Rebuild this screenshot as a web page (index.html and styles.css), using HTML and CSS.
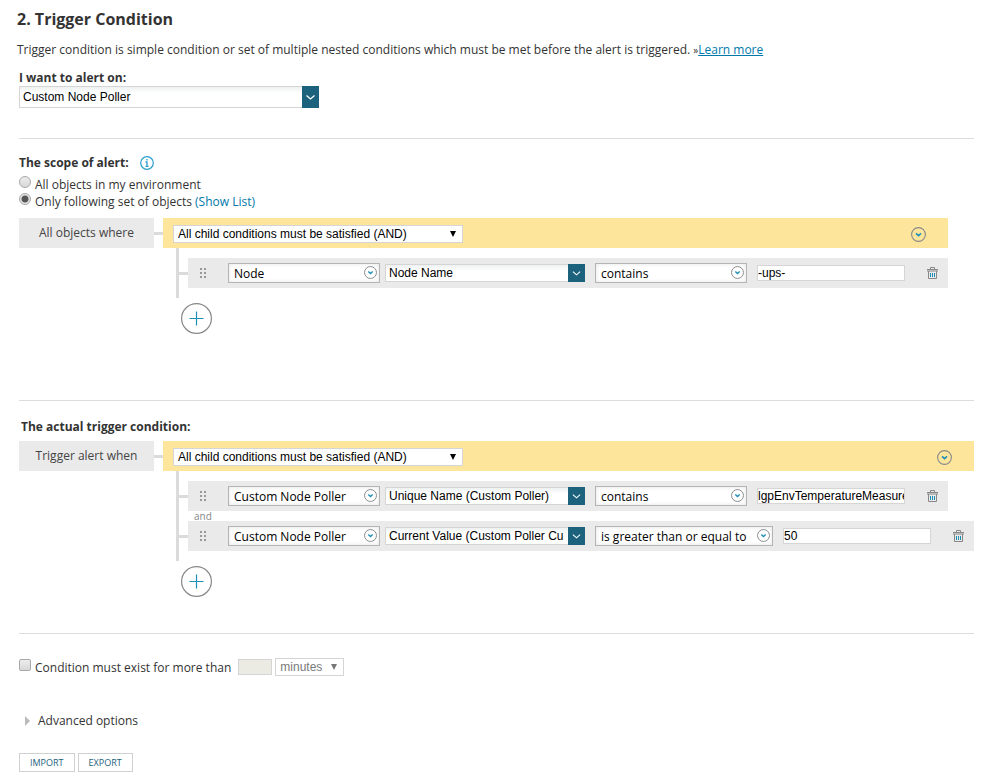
FILE: index.html
```
<!DOCTYPE html>
<html lang="en">
<head>
  <meta charset="utf-8">
  <title>Trigger Condition</title>
  <link rel="stylesheet" href="styles.css">
</head>
<body>

  <!-- shared icons -->
  <svg class="sprite" width="0" height="0">
    <symbol id="chevron" viewBox="0 0 17 20">
      <path d="M4.500 8.500L8.500 12L12.500 8.500" fill="none" stroke="#fff" stroke-width="1.200"/>
    </symbol>
    <symbol id="circle-chevron" viewBox="0 0 15 15">
      <circle cx="7.500" cy="7.500" r="6.900" fill="none" stroke="#888" stroke-width="1.100"/>
      <path d="M5 6.300L7.500 8.600L10 6.300" fill="none" stroke="#1d8fb5" stroke-width="1.600"/>
    </symbol>
    <symbol id="trash" viewBox="0 0 11 12">
      <path d="M3.500 2V.500H7.500V2M0 2.500H11M1.500 4V11.500H9.500V4M0 4H11" fill="none" stroke="#888"/>
      <path d="M3.500 6V10M5.500 6V10M7.500 6V10" stroke="#1d8fb5"/>
    </symbol>
    <symbol id="grip" viewBox="0 0 7 11">
      <path d="M0 0h2v2H0zM4 0h2v2H4zM0 4h2v2H0zM4 4h2v2H4zM0 8h2v2H0zM4 8h2v2H4z" fill="#999"/>
    </symbol>
    <symbol id="plus" viewBox="0 0 31 31">
      <circle cx="15.500" cy="15.500" r="14.900" fill="#fff" stroke="#888" stroke-width="1.200"/>
      <path d="M8.500 15.500H22.500M15.500 8.500V22.500" stroke="#1d8fb5" stroke-width="1.200"/>
    </symbol>
  </svg>

  <header class="intro">
    <h2>2. Trigger Condition</h2>
    <p>Trigger condition is simple condition or set of multiple nested conditions which must be met before the alert is triggered. <span class="raquo">»</span><a href="#">Learn more</a></p>
  </header>

  <section class="alert-on">
    <label class="title" for="alertOn">I want to alert on:</label>
    <div class="combo combo-large">
      <select id="alertOn"><option>Custom Node Poller</option></select>
      <svg><use href="#chevron"/></svg>
    </div>
  </section>

  <section class="scope">
    <div class="title">The scope of alert:
      <svg class="info" viewBox="0 0 14 14">
        <circle cx="7" cy="7" r="6.300" fill="none" stroke="#2a9fd0" stroke-width="1.200"/>
        <path d="M7 3V4.500M5.500 6H7V10M5.500 10.300H8.500" fill="none" stroke="#2a9fd0" stroke-width="1.300"/>
      </svg>
    </div>
    <div class="choice">
      <input type="radio" name="scope" id="scopeAll">
      <label for="scopeAll">All objects in my environment</label>
    </div>
    <div class="choice">
      <input type="radio" name="scope" id="scopeSet" checked>
      <label for="scopeSet">Only following set of objects</label> <a href="#">(Show List)</a>
    </div>

    <div class="query">
      <div class="query-label">All objects where</div>
      <div class="group">
        <div class="group-bar">
          <div class="plain">
            <select aria-label="Scope operator"><option>All child conditions must be satisfied (AND)</option></select>
          </div>
          <button class="icon-btn" aria-label="Group menu"><svg class="circle"><use href="#circle-chevron"/></svg></button>
        </div>
        <div class="children">
          <div class="rule">
            <svg class="grip"><use href="#grip"/></svg>
            <div class="round">
              <select aria-label="Object"><option>Node</option></select>
              <svg><use href="#circle-chevron"/></svg>
            </div>
            <div class="combo">
              <select aria-label="Field"><option>Node Name</option></select>
              <svg><use href="#chevron"/></svg>
            </div>
            <div class="round operator">
              <select aria-label="Comparison"><option>contains</option></select>
              <svg><use href="#circle-chevron"/></svg>
            </div>
            <input class="value" type="text" value="-ups-" aria-label="Value">
            <button class="icon-btn" aria-label="Delete"><svg class="trash"><use href="#trash"/></svg></button>
          </div>
        </div>
        <button class="add" aria-label="Add condition"><svg><use href="#plus"/></svg></button>
      </div>
    </div>
  </section>

  <section class="trigger">
    <div class="title indent">The actual trigger condition:</div>
    <div class="query">
      <div class="query-label">Trigger alert when</div>
      <div class="group">
        <div class="group-bar">
          <div class="plain">
            <select aria-label="Trigger operator"><option>All child conditions must be satisfied (AND)</option></select>
          </div>
          <button class="icon-btn" aria-label="Group menu"><svg class="circle"><use href="#circle-chevron"/></svg></button>
        </div>
        <div class="children">
          <div class="rule">
            <svg class="grip"><use href="#grip"/></svg>
            <div class="round">
              <select aria-label="Object"><option>Custom Node Poller</option></select>
              <svg><use href="#circle-chevron"/></svg>
            </div>
            <div class="combo">
              <select aria-label="Field"><option>Unique Name (Custom Poller)</option></select>
              <svg><use href="#chevron"/></svg>
            </div>
            <div class="round operator">
              <select aria-label="Comparison"><option>contains</option></select>
              <svg><use href="#circle-chevron"/></svg>
            </div>
            <input class="value" type="text" value="lgpEnvTemperatureMeasurement" aria-label="Value">
            <button class="icon-btn" aria-label="Delete"><svg class="trash"><use href="#trash"/></svg></button>
          </div>
          <div class="joiner">and</div>
          <div class="rule">
            <svg class="grip"><use href="#grip"/></svg>
            <div class="round">
              <select aria-label="Object"><option>Custom Node Poller</option></select>
              <svg><use href="#circle-chevron"/></svg>
            </div>
            <div class="combo">
              <select aria-label="Field"><option>Current Value (Custom Poller Current Value)</option></select>
              <svg><use href="#chevron"/></svg>
            </div>
            <div class="round operator wide">
              <select aria-label="Comparison"><option>is greater than or equal to</option></select>
              <svg><use href="#circle-chevron"/></svg>
            </div>
            <input class="value" type="text" value="50" aria-label="Value">
            <button class="icon-btn" aria-label="Delete"><svg class="trash"><use href="#trash"/></svg></button>
          </div>
        </div>
        <button class="add" aria-label="Add condition"><svg><use href="#plus"/></svg></button>
      </div>
    </div>
  </section>

  <section class="options">
    <div class="duration">
      <div class="choice">
        <input type="checkbox" id="mustExist">
        <label for="mustExist">Condition must exist for more than</label>
      </div>
      <input class="amount" type="text" aria-label="Duration" disabled>
      <div class="plain unit">
        <select aria-label="Unit" disabled><option>minutes</option></select>
      </div>
    </div>
    <button class="advanced">Advanced options</button>
    <div class="actions">
      <button>IMPORT</button>
      <button>EXPORT</button>
    </div>
  </section>

</body>
</html>
```
FILE: styles.css
```
* {
  box-sizing: border-box;
}

body {
  margin: 0;
  padding: 8px 15px 10px 19px;
  font-family: "Open Sans", sans-serif;
  font-size: 12px;
  line-height: 18px;
  color: #333;
  background: #fff;
}

a {
  color: #0079aa;
}

select, input, button {
  font-family: "Liberation Sans", Arial, sans-serif;
  font-size: 12px;
  color: #000;
  margin: 0;
}

button {
  background: none;
  border: 0;
  padding: 0;
  cursor: pointer;
}

svg {
  display: block;
}

.sprite {
  position: absolute;
}

.intro {
  margin-left: -2px;
}

h2 {
  margin: 0 0 11px;
  font-size: 16px;
  font-weight: 700;
  line-height: 22px;
}

p {
  margin: 0;
}

.raquo {
  font-size: 10px;
  line-height: 10px;
}

.title {
  display: flex;
  align-items: center;
  font-weight: 700;
}

.indent {
  margin-left: 2px;
}

.info {
  width: 14px;
  height: 14px;
  margin-left: 11px;
}

.alert-on {
  padding: 10px 0 30px;
}

.alert-on .title {
  line-height: 17px;
}

.scope {
  border-top: 1px solid #dcdcdc;
  padding: 15px 0 66px;
}

.trigger {
  border-top: 1px solid #dcdcdc;
  padding: 17px 0 36px;
}

.options {
  border-top: 1px solid #dcdcdc;
  padding-top: 24px;
}

/* radios and tick boxes */
.choice {
  display: flex;
  align-items: flex-start;
  line-height: 17px;
}

.scope .title {
  margin-bottom: 4px;
}

.choice input {
  appearance: none;
  width: 12px;
  height: 12px;
  margin-right: 4px;
  border: 1px solid #a8a8a8;
  border-radius: 50%;
  background: linear-gradient(#ececec, #d8d8d8);
}

.choice input[type="radio"]:checked {
  background: radial-gradient(circle, #555 0, #555 3px, #e4e4e4 4px);
}

.choice input[type="checkbox"] {
  border-radius: 2px;
}

.choice a {
  margin-left: 3px;
  text-decoration: none;
}

/* drop-downs */
select {
  appearance: none;
  display: block;
  width: 100%;
  height: 18px;
  padding: 0 20px 0 3px;
  border: 1px solid #d5d5d5;
  border-radius: 0;
  background: #fff;
}

.combo, .round, .plain {
  position: relative;
}

.combo {
  width: 200px;
}

.combo select {
  background: linear-gradient(#eef1f2, #fff 6px);
}

.combo svg {
  position: absolute;
  top: 0;
  right: 0;
  width: 17px;
  height: 100%;
  background: #1c627d;
  pointer-events: none;
}

.combo-large {
  width: 300px;
}

.combo-large select {
  height: 22px;
}

.round {
  width: 152px;
}

.round.wide {
  width: 178px;
}

.round select {
  height: 20px;
  padding-left: 5px;
  font-family: "Open Sans", sans-serif;
  border-color: #b4b4b4;
  box-shadow: inset 0 0 4px #e4e4e4;
}

.round svg {
  position: absolute;
  top: 3px;
  right: 3px;
  width: 13px;
  height: 13px;
  pointer-events: none;
}

.plain {
  width: 290px;
}

.plain select {
  padding-left: 4px;
}

.plain::after {
  content: "";
  position: absolute;
  top: 6px;
  right: 7px;
  border: solid transparent;
  border-width: 6px 3px 0;
  border-top-color: #000;
}

/* condition tree */
.query {
  display: flex;
  align-items: flex-start;
}

.scope .query {
  margin-top: 8px;
}

.trigger .query {
  margin-top: 5px;
}

.query-label {
  width: 135px;
  height: 30px;
  line-height: 30px;
  text-align: center;
  color: #444;
  background: #eaeaea;
}

.query-label + .group::before {
  content: "";
  position: absolute;
  top: 14px;
  left: -9px;
  width: 9px;
  height: 3px;
  background: #dbdbdb;
}

.group {
  position: relative;
  margin-left: 9px;
}

.group-bar {
  display: flex;
  align-items: center;
  justify-content: space-between;
  height: 30px;
  padding: 2px 22px 0 10px;
  background: #fee59c;
}

.circle {
  width: 15px;
  height: 15px;
}

.children {
  display: flex;
  flex-direction: column;
  align-items: flex-start;
  margin-left: 13px;
  padding: 10px 0 10px 9px;
  border-left: 3px solid #dbdbdb;
}

.rule {
  position: relative;
  display: flex;
  align-items: center;
  height: 30px;
  padding: 0 10px 0 12px;
  background: #eaeaea;
}

.rule::before {
  content: "";
  position: absolute;
  top: 14px;
  left: -9px;
  width: 9px;
  height: 3px;
  background: #dbdbdb;
}

.grip {
  width: 7px;
  height: 11px;
  margin-right: 21px;
}

.rule .combo {
  margin: 0 10px 0 5px;
}

.value {
  width: 148px;
  height: 16px;
  margin: 0 22px 0 10px;
  padding: 0;
  border: 1px solid #d5d5d5;
}

.trash {
  width: 11px;
  height: 12px;
}

.joiner {
  height: 10px;
  margin-left: 6px;
  font-size: 10px;
  line-height: 10px;
  color: #888;
}

.add {
  display: block;
  margin: 5px 0 0 18px;
}

.add svg {
  width: 31px;
  height: 31px;
}

/* bottom part */
.duration {
  display: flex;
  align-items: center;
}

.amount {
  width: 34px;
  height: 16px;
  margin: 0 3px 0 7px;
  border: 1px solid #d5d5d5;
  background: #ebebe4;
}

.unit {
  width: 69px;
}

.unit select {
  color: #7a7a7a;
  opacity: 1;
}

.unit::after {
  border-top-color: #777;
}

.advanced {
  display: flex;
  align-items: center;
  margin: 36px 0 23px 6px;
  font-family: "Open Sans", sans-serif;
  line-height: 18px;
  color: #333;
}

.advanced::before {
  content: "";
  margin-right: 8px;
  border: solid transparent;
  border-width: 5px 0 5px 5px;
  border-left-color: #bbb;
}

.actions {
  display: flex;
  gap: 3px;
}

.actions button {
  height: 19px;
  padding: 0 10px;
  border: 1px solid #d0d0d0;
  font-family: "Open Sans", sans-serif;
  font-size: 9px;
  color: #1c627d;
}
```
